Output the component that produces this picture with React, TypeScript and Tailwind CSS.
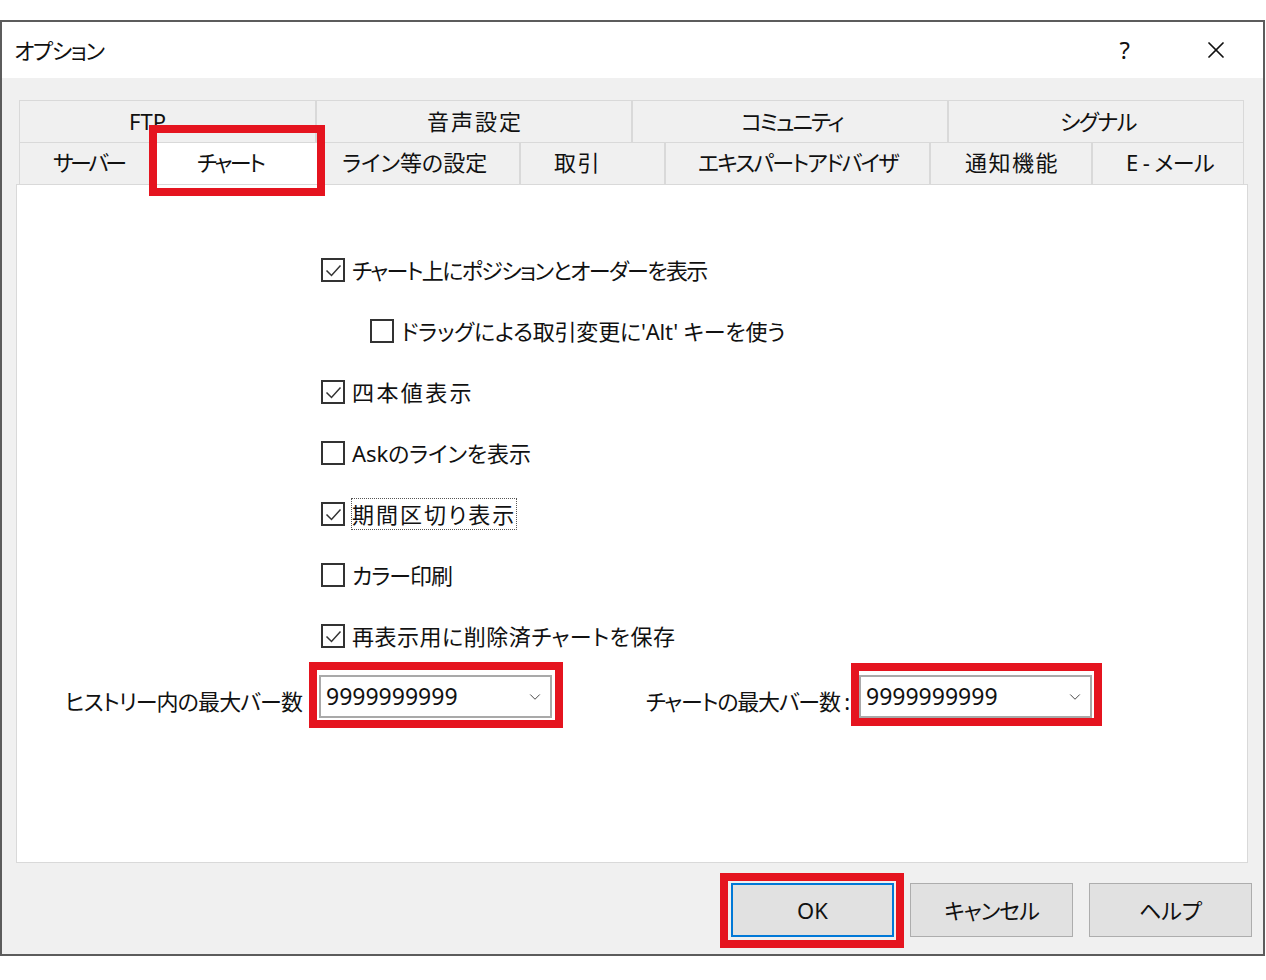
import { ChevronDown, X } from "lucide-react";

const topTabs = [
  { label: "FTP", cls: "w-[297px] pl-[109px]" },
  { label: "音声設定", cls: "w-[316px] pl-[110px] tracking-[2px]" },
  { label: "コミュニティ", cls: "w-[316px] pl-[108px] tracking-[-2px]" },
  { label: "シグナル", cls: "w-[296px] pl-[111px] tracking-[-1.5px]" },
];

const bottomTabs = [
  { label: "サーバー", cls: "w-[133px] pl-[33px] bg-[#f0f0f0] tracking-[-3.5px]" },
  { label: "チャート", cls: "w-[166px] pl-[44px] bg-white tracking-[-2.5px]" },
  { label: "ライン等の設定", cls: "w-[202px] pl-[23px] bg-[#f0f0f0]" },
  { label: "取引", cls: "w-[145px] pl-[33px] bg-[#f0f0f0] tracking-[1.5px]" },
  { label: "エキスパートアドバイザ", cls: "w-[265px] pl-[32px] bg-[#f0f0f0] tracking-[-1.8px]" },
  { label: "通知機能", cls: "w-[162px] pl-[34px] bg-[#f0f0f0] tracking-[1.5px]" },
  { label: "E - メール", cls: "w-[152px] pl-[33px] bg-[#f0f0f0] tracking-[-0.6px]" },
];

const rows = [
  { label: "チャート上にポジションとオーダーを表示", checked: true, tr: "tracking-[-1.65px]" },
  { label: "ドラッグによる取引変更に'Alt' キーを使う", checked: false, indent: true, tr: "tracking-[-0.2px]" },
  { label: "四本値表示", checked: true, tr: "tracking-[2.4px]" },
  { label: "Askのラインを表示", checked: false, tr: "tracking-[-0.1px]" },
  { label: "期間区切り表示", checked: true, focus: true, tr: "tracking-[2px]" },
  { label: "カラー印刷", checked: false, tr: "tracking-[-1px]" },
  { label: "再表示用に削除済チャートを保存", checked: true, tr: "tracking-[0.5px]" },
];

function Check({ checked }: { checked: boolean }) {
  return (
    <span className="flex h-[24px] w-[24px] shrink-0 items-center justify-center border-2 border-[#333] bg-white">
      {checked && (
        <svg width="19" height="19" viewBox="0 0 19 19" fill="none">
          <polyline points="2.5,9.5 7.5,14.5 16.5,4.5" stroke="#333" strokeWidth="1.5" />
        </svg>
      )}
    </span>
  );
}

function Combo({ value }: { value: string }) {
  return (
    <div className="flex h-[43px] w-[233px] shrink-0 items-center justify-between border-2 border-[#a9a9a9] bg-white pl-[5px] pr-[6px]">
      <span className="text-[23px] leading-none">{value}</span>
      <ChevronDown size={18} strokeWidth={1.3} className="text-[#444]" />
    </div>
  );
}

export default function App() {
  return (
    <div className="relative h-[980px] w-[1266px] bg-white pt-[20px] font-['Noto_Sans','Noto_Sans_CJK_JP',sans-serif] text-[22px] text-[#111] [font-feature-settings:'palt']">
      <div className="flex h-[936px] w-[1265px] flex-col border-2 border-[#5c5c5c]">
        <div className="flex h-[56px] items-center bg-white pl-[12px]">
          <span className="leading-none tracking-[-1.4px]">オプション</span>
          <span className="ml-auto mr-[72px] text-[24px] leading-none">?</span>
          <X size={28} strokeWidth={1.5} className="mr-[33px]" />
        </div>

        <div className="flex flex-1 flex-col bg-[#f0f0f0] pl-[14px] pt-[22px]">
          <div className="ml-[3px] flex h-[42px] w-[1225px] border-t border-[#d9d9d9]">
            {topTabs.map((t) => (
              <div key={t.label} className={`flex items-center border-l border-r border-[#d9d9d9] bg-[#f0f0f0] ${t.cls}`}>
                <span className="pb-[1px] leading-none">{t.label}</span>
              </div>
            ))}
          </div>
          <div className="ml-[3px] flex h-[42px] w-[1225px] border-t border-[#d9d9d9]">
            {bottomTabs.map((t) => (
              <div key={t.label} className={`flex items-center border-l border-r border-[#d9d9d9] ${t.cls}`}>
                <span className="pb-[3px] leading-none">{t.label}</span>
              </div>
            ))}
          </div>

          <div className="flex h-[679px] w-[1232px] flex-col border border-[#d9d9d9] bg-white pt-[70px]">
            <div className="flex flex-col gap-[31px] pl-[304px]">
              {rows.map((r) => (
                <div key={r.label} className={`flex h-[30px] items-center gap-[7px] ${r.indent ? "pl-[49px]" : ""}`}>
                  <Check checked={r.checked} />
                  <span className={`leading-[30px] ${r.tr} ${r.focus ? "-ml-px border border-dotted border-[#555]" : ""}`}>{r.label}</span>
                </div>
              ))}
            </div>
            <div className="mt-[24px] flex items-center">
              <span className="mr-[17px] w-[285px] shrink-0 pt-[8px] text-right leading-none tracking-[-0.9px]">ヒストリー内の最大バー数</span>
              <Combo value="9999999999" />
              <span className="mr-[10px] w-[297px] shrink-0 pt-[8px] text-right leading-none tracking-[-1.2px]">チャートの最大バー数 :</span>
              <Combo value="9999999999" />
            </div>
          </div>

          <div className="mt-[20px] flex w-[1236px] justify-end gap-[16px]">
            <button className="h-[54px] w-[163px] border-2 border-[#0078d7] bg-[#e1e1e1] text-[22px] leading-none">OK</button>
            <button className="h-[54px] w-[163px] border border-[#adadad] bg-[#e1e1e1] text-[22px] leading-none tracking-[-1px]">キャンセル</button>
            <button className="h-[54px] w-[163px] border border-[#adadad] bg-[#e1e1e1] text-[22px] leading-none">ヘルプ</button>
          </div>
        </div>
      </div>

      <div className="pointer-events-none absolute left-[149px] top-[125px] h-[71px] w-[176px] border-[8px] border-[#e5141f]" />
      <div className="pointer-events-none absolute left-[309px] top-[662px] h-[66px] w-[254px] border-[8px] border-[#e5141f]" />
      <div className="pointer-events-none absolute left-[851px] top-[663px] h-[63px] w-[251px] border-[8px] border-[#e5141f]" />
      <div className="pointer-events-none absolute left-[720px] top-[873px] h-[75px] w-[184px] border-[8px] border-[#e5141f]" />
    </div>
  );
}
